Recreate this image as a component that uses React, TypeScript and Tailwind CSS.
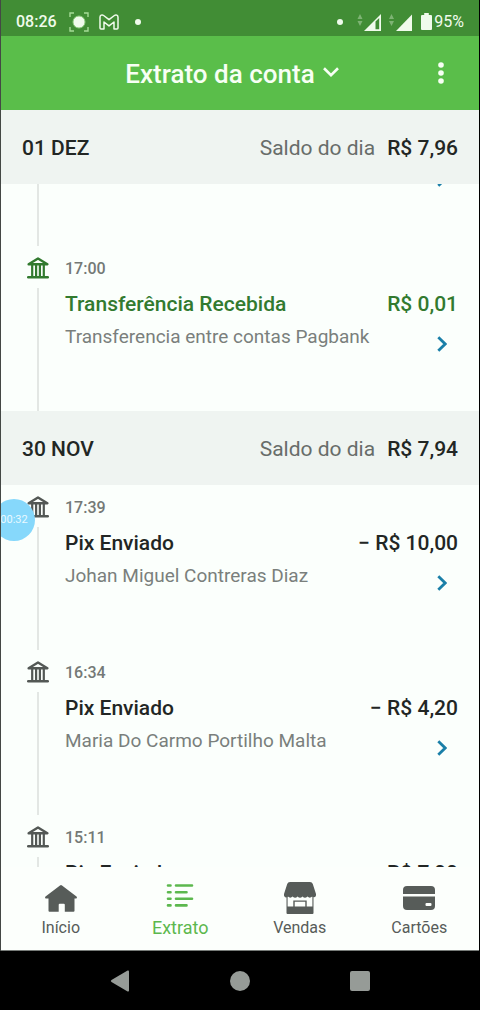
import { ReactNode, useState } from 'react';

interface Entry {
  time: string;
  title: string;
  detail: string;
  amount: string;
  received?: boolean;
}

interface Day {
  label: string;
  balance: string;
  entries: Entry[];
}

type Tab = 'inicio' | 'extrato' | 'vendas' | 'cartoes';

const days: Day[] = [
  {
    label: '01 DEZ',
    balance: 'R$ 7,96',
    entries: [
      { time: '17:00', title: 'Transferência Recebida', detail: 'Transferencia entre contas Pagbank', amount: 'R$ 0,01', received: true },
    ],
  },
  {
    label: '30 NOV',
    balance: 'R$ 7,94',
    entries: [
      { time: '17:39', title: 'Pix Enviado', detail: 'Johan Miguel Contreras Diaz', amount: '− R$ 10,00' },
      { time: '16:34', title: 'Pix Enviado', detail: 'Maria Do Carmo Portilho Malta', amount: '− R$ 4,20' },
      { time: '15:11', title: 'Pix Enviado', detail: '', amount: '− R$ 7,00' },
    ],
  },
];

function BankIcon() {
  return (
    <svg viewBox="0 0 22 22" className="w-[22px] h-[22px] shrink-0" fill="none" stroke="currentColor" strokeWidth="2.4">
      <path d="M1.6 7.2 11 1.5l9.400 5.700z" strokeLinejoin="round" />
      <path d="M5.200 8v12M9.100 8v12M12.900 8v12M16.800 8v12" strokeWidth="2.2" />
      <path d="M1.200 20.200h19.600" strokeWidth="2.400" strokeLinecap="round" />
    </svg>
  );
}

function ChevronRight() {
  return (
    <svg viewBox="0 0 10 16" className="w-[10px] h-4" fill="none" stroke="#1a7fa8" strokeWidth="2.800">
      <path d="M1.300 1.200 8.200 8l-6.900 6.800" />
    </svg>
  );
}

function StatusBar() {
  return (
    <div className="h-9 shrink-0 bg-[#418d35] text-[#f0fbec] flex items-center justify-between px-[15px] pt-[7px]">
      <div className="flex items-center">
        <span className="text-base font-medium">08:26</span>
        <svg viewBox="0 0 20 20" className="w-5 h-5 ml-3" fill="none" stroke="#a5dc97" strokeWidth="1.4">
          <path d="M1 5V1h4M15 1h4v4M19 15v4h-4M5 19H1v-4" />
          <circle cx="10" cy="10" r="6" fill="#f0fbec" stroke="#8fce80" strokeWidth="1" />
        </svg>
        <svg viewBox="0 0 20 16" className="w-5 h-4 ml-2.5" fill="none" stroke="currentColor" strokeWidth="1.5" strokeLinejoin="round">
          <path d="M1 3.200C1 1.200 3 .3 4.600 1.500L10 5.700l5.400-4.200C17 .3 19 1.200 19 3.200V14a1 1 0 0 1-1 1h-3V8l-5 3.900L5 8v7H2a1 1 0 0 1-1-1z" />
        </svg>
        <span className="w-1.5 h-1.5 rounded-full bg-current ml-4" />
      </div>
      <div className="flex items-center">
        <span className="w-1.5 h-1.5 rounded-full bg-current mr-3" />
        <svg viewBox="0 0 58 18" className="w-[58px] h-[18px]" fill="currentColor">
          <path d="M2.500 6 5 1l2.500 5zM2.500 8h5L5 13zM34 6l2.500-5L39 6zM34 8h5l-2.500 5z" opacity=".35" />
          <path fillRule="evenodd" d="M9 18 26 1v17zM20.500 8.500V16.200H24.200V5z" />
          <path d="M41 18 57 1.500V18z" />
        </svg>
        <svg viewBox="0 0 11 17" className="w-[11px] h-[17px] ml-2" fill="currentColor">
          <path d="M3.200 0h4.600v2H10a1 1 0 0 1 1 1v13a1 1 0 0 1-1 1H1a1 1 0 0 1-1-1V3a1 1 0 0 1 1-1h2.200z" />
        </svg>
        <span className="text-base ml-0.5">95%</span>
      </div>
    </div>
  );
}

function AppBar() {
  return (
    <header className="h-[74px] shrink-0 bg-[#5abe4a] text-[#f7fff4] grid grid-cols-[1fr_auto_1fr] items-center pl-3 pr-7">
      <span />
      <button type="button" className="flex items-center gap-2 pt-0.5 text-[26px] leading-8 font-medium cursor-pointer">
        Extrato da conta
        <svg viewBox="0 0 16 10" className="w-4 h-[10px] mb-1" fill="none" stroke="currentColor" strokeWidth="2.600">
          <path d="M1 1.300 8 8.200l7-6.900" />
        </svg>
      </button>
      <button type="button" aria-label="Mais opções" className="justify-self-end w-5 flex justify-center cursor-pointer">
        <svg viewBox="0 0 6 22" className="w-1.5 h-[22px]" fill="currentColor">
          <circle cx="3" cy="3" r="2.800" />
          <circle cx="3" cy="11" r="2.800" />
          <circle cx="3" cy="19" r="2.800" />
        </svg>
      </button>
    </header>
  );
}

function DayHeader({ label, balance }: { label: string; balance: string }) {
  return (
    <div className="h-[74px] shrink-0 bg-[#eff4f1] flex items-center justify-between px-[21px] pt-0.5 text-[21px] leading-7 text-[#222624]">
      <h2 className="font-medium">{label}</h2>
      <p>
        <span className="text-[#686d6a] mr-3">Saldo do dia</span>
        <span className="font-medium">{balance}</span>
      </p>
    </div>
  );
}

function EntryRow({ entry }: { entry: Entry }) {
  return (
    <li className="h-[165px] shrink-0 flex pl-[26px] pr-[21px]">
      <div className={`w-[22px] flex flex-col items-center pt-[11px] gap-[9px] ${entry.received ? 'text-[#327a2f]' : 'text-[#535855]'}`}>
        <BankIcon />
        <span className="w-0.5 flex-1 bg-[#e3e7e4]" />
      </div>
      <div className="flex-1 ml-4 pt-[13px]">
        <time className="block h-5 text-base leading-5 font-medium text-[#747976]">{entry.time}</time>
        <div className={`h-7 flex justify-between mt-[11px] text-[21px] leading-7 font-medium ${entry.received ? 'text-[#327a2f]' : 'text-[#222624]'}`}>
          <h3>{entry.title}</h3>
          <span>{entry.amount}</span>
        </div>
        <div className="flex justify-between mt-[5px]">
          <p className="text-[19px] leading-7 text-[#7a7f7c]">{entry.detail}</p>
          <button type="button" aria-label="Ver detalhes" className="mt-[13px] mr-[11px] self-start cursor-pointer">
            <ChevronRight />
          </button>
        </div>
      </div>
    </li>
  );
}

const tabs: { id: Tab; label: string; icon: ReactNode }[] = [
  {
    id: 'inicio',
    label: 'Início',
    icon: (
      <svg viewBox="0 0 32 32" className="w-8 h-8" fill="currentColor">
        <path d="M15 3.400a1.500 1.500 0 0 1 2 0l14.500 11.200c.8.700.4 1.900-.7 1.900H29.500v12.200a1 1 0 0 1-1 1h-8.700v-7a1 1 0 0 0-1-1h-4.100a1 1 0 0 0-1 1v7H4.500a1 1 0 0 1-1-1V16.500H1.200c-1.100 0-1.500-1.200-.7-1.900z" />
      </svg>
    ),
  },
  {
    id: 'extrato',
    label: 'Extrato',
    icon: (
      <svg viewBox="0 0 32 32" className="w-8 h-8" fill="none" stroke="currentColor" strokeWidth="2.600" strokeLinecap="round">
        <path d="M4 3.500h2.500M12 3.500h16M4 10.200h2.500M12 10.200h10.500M4 16.800h2.500M12 16.800h16M4 23.400h2.500M12 23.400h10.500" />
      </svg>
    ),
  },
  {
    id: 'vendas',
    label: 'Vendas',
    icon: (
      <svg viewBox="0 0 32 32" className="w-8 h-8" fill="currentColor">
        <path d="M6 0h20a3 3 0 0 1 2.800 2L32 12v1a2.200 2.200 0 0 1-3.800 1.600 3.500 3.500 0 0 1-4.800 0 3.500 3.500 0 0 1-4.900 0 3.500 3.500 0 0 1-4.900 0 3.500 3.500 0 0 1-4.900 0 3.500 3.500 0 0 1-4.800 0A2.200 2.200 0 0 1 0 13v-1L3.200 2A3 3 0 0 1 6 0z" />
        <path fillRule="evenodd" d="M2.500 14H3.600v10.500H9.300v-6h13.400v6H28.400V14h1.100v17a1 1 0 0 1-1 1H3.500a1 1 0 0 1-1-1zM10.700 19.800v4.700h10.600v-4.700z" />
      </svg>
    ),
  },
  {
    id: 'cartoes',
    label: 'Cartões',
    icon: (
      <svg viewBox="0 0 32 32" className="w-8 h-8" fill="currentColor">
        <path d="M4 4h24a4 4 0 0 1 4 4v4H0V8a4 4 0 0 1 4-4z" />
        <path fillRule="evenodd" d="M0 14.500h32V24a4 4 0 0 1-4 4H4a4 4 0 0 1-4-4zM23.500 21a1 1 0 0 0-1 1v1a1 1 0 0 0 1 1h4a1 1 0 0 0 1-1v-1a1 1 0 0 0-1-1z" />
      </svg>
    ),
  },
];

function TabBar({ active, onChange }: { active: Tab; onChange: (tab: Tab) => void }) {
  return (
    <nav className="h-[84px] shrink-0 bg-[#fcfffc] grid grid-cols-4 border-b border-[#777b78]">
      {tabs.map((tab) => (
        <button
          key={tab.id}
          type="button"
          onClick={() => onChange(tab.id)}
          className={`flex flex-col items-center pt-[15px] cursor-pointer ${active === tab.id ? 'text-[#5cb84e] text-lg' : 'text-[#575c59] text-base'}`}
        >
          {tab.icon}
          <span className="leading-6 mt-0.5">{tab.label}</span>
        </button>
      ))}
    </nav>
  );
}

function SystemNav() {
  return (
    <div className="h-[59px] shrink-0 bg-black text-[#969b97] flex items-center justify-center gap-[100px]">
      <button type="button" aria-label="Voltar">
        <svg viewBox="0 0 20 22" className="w-5 h-[22px]" fill="currentColor">
          <path d="M17.600.6q1.400-.6 1.400 1v18.800q0 1.600-1.400 1L1.500 12q-1.500-1 0-2z" />
        </svg>
      </button>
      <button type="button" aria-label="Tela inicial" className="w-5 h-5 rounded-full bg-current" />
      <button type="button" aria-label="Recentes" className="w-5 h-5 rounded-xs bg-current" />
    </div>
  );
}

export default function App() {
  const [tab, setTab] = useState<Tab>('extrato');

  return (
    <div className="h-screen flex flex-col bg-black font-[Roboto,sans-serif]">
      <div className="flex-1 min-h-0 flex flex-col border-l border-l-[#444845] border-r border-r-black">
        <StatusBar />
        <AppBar />
        <main className="relative flex-1 min-h-0 overflow-hidden bg-[#fbfffc]">
          {days.map((day, i) => (
            <section key={day.label}>
              <DayHeader label={day.label} balance={day.balance} />
              {/* Tail of the entry that is scrolled under the first header */}
              {i === 0 && (
                <ul className="h-[62px] overflow-hidden flex flex-col justify-end">
                  <EntryRow entry={{ time: '', title: '', detail: '', amount: '' }} />
                </ul>
              )}
              <ul>
                {day.entries.map((entry) => (
                  <EntryRow key={entry.time} entry={entry} />
                ))}
              </ul>
            </section>
          ))}
          {/* Screen recorder bubble */}
          <div className="absolute top-[389px] -left-2 w-[42px] h-[42px] rounded-full bg-[#86d8fb] text-[#e9f8ff] text-[11px] flex items-center justify-center">
            00:32
          </div>
        </main>
        <TabBar active={tab} onChange={setTab} />
      </div>
      <SystemNav />
    </div>
  );
}
